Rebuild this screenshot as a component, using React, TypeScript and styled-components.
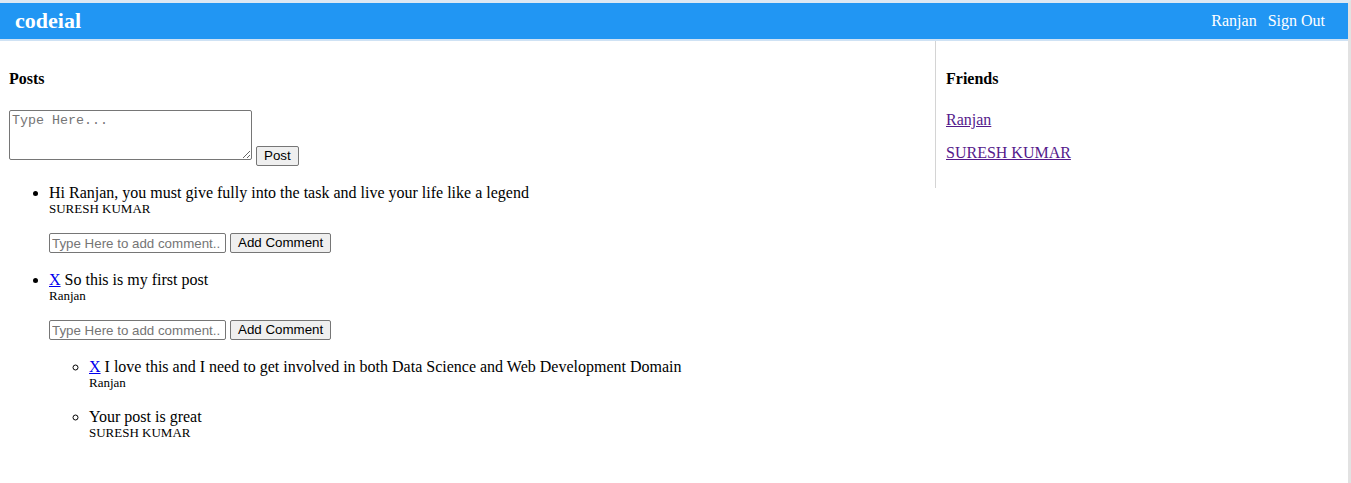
import React from "react";
import styled, { createGlobalStyle } from "styled-components";

const GlobalStyle = createGlobalStyle`
  html, body { margin: 0; padding: 0; background: #ffffff; }
  body { font-family: "Liberation Serif", "Times New Roman", serif; font-size: 16px; color: #000; }
  * { box-sizing: border-box; }
`;

const Page = styled.div`
  width: 1351px;
  min-height: 483px;
  border-right: 3px solid #e2e2e2;
  border-top: 3px solid #dde8f3;
`;

const Header = styled.header`
  height: 36px;
  background: #2196f3;
  display: flex;
  align-items: center;
  justify-content: space-between;
  padding: 0 23px 0 15px;
  border-bottom: 2px solid #cfe2f4;
  box-sizing: content-box;
`;

const Logo = styled.div`
  color: #ffffff;
  font-weight: bold;
  font-size: 22px;
`;

const Nav = styled.nav`
  display: flex;
  gap: 11px;
  color: #ffffff;
  font-size: 16px;
`;

const Main = styled.main`
  display: flex;
  align-items: flex-start;
`;

const PostsColumn = styled.section`
  flex: 0 0 935px;
  padding: 29px 0 40px 9px;
`;

const FriendsColumn = styled.aside`
  border-left: 1px solid #d4d4d4;
  padding: 29px 0 26px 10px;
  display: flex;
  flex-direction: column;
`;

const Heading = styled.h4`
  margin: 0;
  font-size: 16px;
  line-height: 18px;
  font-weight: bold;
`;

const NewPostForm = styled.form`
  margin-top: 22px;
  display: flex;
  align-items: flex-end;
  gap: 4px;
`;

const TextArea = styled.textarea`
  width: 243px;
  height: 50px;
  margin: 0 0 6px 0;
  border: 1px solid #767676;
  border-radius: 2px;
  padding: 2px;
  font-family: "Liberation Mono", monospace;
  font-size: 13.33px;
  &::placeholder { color: #757575; }
`;

const Button = styled.button`
  height: 20px;
  padding: 1px 7px;
  background: #efefef;
  border: 1px solid #767676;
  border-radius: 2px;
  font-family: "Liberation Sans", Arial, sans-serif;
  font-size: 13.33px;
  color: #000;
  line-height: 16px;
`;

const PostList = styled.ul<{ $nested?: boolean }>`
  margin: 0;
  padding-left: 40px;
  list-style: ${(p) => (p.$nested ? "circle" : "disc")};
`;

const Item = styled.li`
  margin-top: 17px;
`;

const ItemText = styled.div`
  font-size: 16px;
  line-height: 17px;
  padding-top: 1px;
`;

const Author = styled.small`
  display: block;
  font-size: 13px;
  line-height: 15px;
`;

const DeleteLink = styled.a`
  color: #0000ee;
  text-decoration: underline;
`;

const CommentForm = styled.form`
  margin-top: 17px;
  display: flex;
  gap: 4px;
  height: 20px;
`;

const CommentInput = styled.input`
  width: 177px;
  height: 20px;
  border: 1px solid #767676;
  border-radius: 2px;
  padding: 1px 2px;
  font-family: "Liberation Sans", Arial, sans-serif;
  font-size: 13.33px;
  &::placeholder { color: #757575; }
`;

const FriendLink = styled.a<{ $first?: boolean }>`
  color: #551a8b;
  text-decoration: underline;
  font-size: 16px;
  line-height: 18px;
  margin-top: ${(p) => (p.$first ? "23px" : "15px")};
`;

type Comment = { id: number; text: string; author: string; own: boolean };
type Post = { id: number; text: string; author: string; own: boolean; comments: Comment[] };

const posts: Post[] = [
  {
    id: 1,
    text: "Hi Ranjan, you must give fully into the task and live your life like a legend",
    author: "SURESH KUMAR",
    own: false,
    comments: [],
  },
  {
    id: 2,
    text: "So this is my first post",
    author: "Ranjan",
    own: true,
    comments: [
      {
        id: 1,
        text: "I love this and I need to get involved in both Data Science and Web Development Domain",
        author: "Ranjan",
        own: true,
      },
      { id: 2, text: "Your post is great", author: "SURESH KUMAR", own: false },
    ],
  },
];

export default function App() {
  return (
    <>
      <GlobalStyle />
      <Page>
        <Header>
          <Logo>codeial</Logo>
          <Nav>
            <span>Ranjan</span>
            <span>Sign Out</span>
          </Nav>
        </Header>
        <Main>
          <PostsColumn>
            <Heading>Posts</Heading>
            <NewPostForm onSubmit={(e) => e.preventDefault()}>
              <TextArea placeholder="Type Here..." />
              <Button type="submit">Post</Button>
            </NewPostForm>
            <PostList>
              {posts.map((post) => (
                <Item key={post.id}>
                  <ItemText>
                    {post.own && (
                      <>
                        <DeleteLink href="#">X</DeleteLink>{" "}
                      </>
                    )}
                    {post.text}
                  </ItemText>
                  <Author>{post.author}</Author>
                  <CommentForm onSubmit={(e) => e.preventDefault()}>
                    <CommentInput placeholder="Type Here to add comment.." />
                    <Button type="submit">Add Comment</Button>
                  </CommentForm>
                  {post.comments.length > 0 && (
                    <PostList $nested>
                      {post.comments.map((c) => (
                        <Item key={c.id}>
                          <ItemText>
                            {c.own && (
                              <>
                                <DeleteLink href="#">X</DeleteLink>{" "}
                              </>
                            )}
                            {c.text}
                          </ItemText>
                          <Author>{c.author}</Author>
                        </Item>
                      ))}
                    </PostList>
                  )}
                </Item>
              ))}
            </PostList>
          </PostsColumn>
          <FriendsColumn>
            <Heading>Friends</Heading>
            <FriendLink href="#" $first>Ranjan</FriendLink>
            <FriendLink href="#">SURESH KUMAR</FriendLink>
          </FriendsColumn>
        </Main>
      </Page>
    </>
  );
}
